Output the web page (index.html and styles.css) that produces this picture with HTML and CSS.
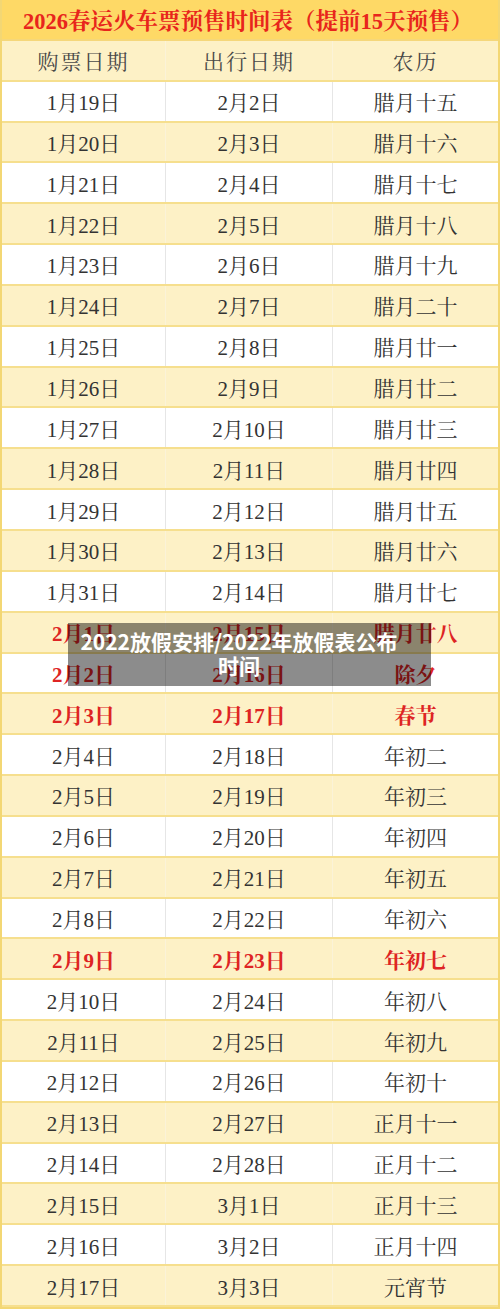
FILE: index.html
```html
<!DOCTYPE html>
<html lang="zh-CN">
<head>
<meta charset="utf-8">
<title>2026春运火车票预售时间表</title>
<link rel="stylesheet" href="styles.css">
</head>
<body>
<div class="page">
  <div class="table">
    <div class="title">2026春运火车票预售时间表（提前15天预售）</div>
    <div class="row head"><div class="cell">购票日期</div><div class="cell">出行日期</div><div class="cell">农历</div></div>
    <div class="row"><div class="cell">1月19日</div><div class="cell">2月2日</div><div class="cell">腊月十五</div></div>
    <div class="row alt"><div class="cell">1月20日</div><div class="cell">2月3日</div><div class="cell">腊月十六</div></div>
    <div class="row"><div class="cell">1月21日</div><div class="cell">2月4日</div><div class="cell">腊月十七</div></div>
    <div class="row alt"><div class="cell">1月22日</div><div class="cell">2月5日</div><div class="cell">腊月十八</div></div>
    <div class="row"><div class="cell">1月23日</div><div class="cell">2月6日</div><div class="cell">腊月十九</div></div>
    <div class="row alt"><div class="cell">1月24日</div><div class="cell">2月7日</div><div class="cell">腊月二十</div></div>
    <div class="row"><div class="cell">1月25日</div><div class="cell">2月8日</div><div class="cell">腊月廿一</div></div>
    <div class="row alt"><div class="cell">1月26日</div><div class="cell">2月9日</div><div class="cell">腊月廿二</div></div>
    <div class="row"><div class="cell">1月27日</div><div class="cell">2月10日</div><div class="cell">腊月廿三</div></div>
    <div class="row alt"><div class="cell">1月28日</div><div class="cell">2月11日</div><div class="cell">腊月廿四</div></div>
    <div class="row"><div class="cell">1月29日</div><div class="cell">2月12日</div><div class="cell">腊月廿五</div></div>
    <div class="row alt"><div class="cell">1月30日</div><div class="cell">2月13日</div><div class="cell">腊月廿六</div></div>
    <div class="row"><div class="cell">1月31日</div><div class="cell">2月14日</div><div class="cell">腊月廿七</div></div>
    <div class="row alt red"><div class="cell">2月1日</div><div class="cell">2月15日</div><div class="cell">腊月廿八</div></div>
    <div class="row red"><div class="cell">2月2日</div><div class="cell">2月16日</div><div class="cell">除夕</div></div>
    <div class="row alt red"><div class="cell">2月3日</div><div class="cell">2月17日</div><div class="cell">春节</div></div>
    <div class="row"><div class="cell">2月4日</div><div class="cell">2月18日</div><div class="cell">年初二</div></div>
    <div class="row alt"><div class="cell">2月5日</div><div class="cell">2月19日</div><div class="cell">年初三</div></div>
    <div class="row"><div class="cell">2月6日</div><div class="cell">2月20日</div><div class="cell">年初四</div></div>
    <div class="row alt"><div class="cell">2月7日</div><div class="cell">2月21日</div><div class="cell">年初五</div></div>
    <div class="row"><div class="cell">2月8日</div><div class="cell">2月22日</div><div class="cell">年初六</div></div>
    <div class="row alt red"><div class="cell">2月9日</div><div class="cell">2月23日</div><div class="cell">年初七</div></div>
    <div class="row"><div class="cell">2月10日</div><div class="cell">2月24日</div><div class="cell">年初八</div></div>
    <div class="row alt"><div class="cell">2月11日</div><div class="cell">2月25日</div><div class="cell">年初九</div></div>
    <div class="row"><div class="cell">2月12日</div><div class="cell">2月26日</div><div class="cell">年初十</div></div>
    <div class="row alt"><div class="cell">2月13日</div><div class="cell">2月27日</div><div class="cell">正月十一</div></div>
    <div class="row"><div class="cell">2月14日</div><div class="cell">2月28日</div><div class="cell">正月十二</div></div>
    <div class="row alt"><div class="cell">2月15日</div><div class="cell">3月1日</div><div class="cell">正月十三</div></div>
    <div class="row"><div class="cell">2月16日</div><div class="cell">3月2日</div><div class="cell">正月十四</div></div>
    <div class="row alt"><div class="cell">2月17日</div><div class="cell">3月3日</div><div class="cell">元宵节</div></div>
  </div>
  <div class="caption">2022放假安排/2022年放假表公布时间</div>
</div>
</body>
</html>
```

FILE: styles.css
```css
html, body {
  margin: 0;
  padding: 0;
  background: #ffffff;
}
.page {
  position: relative;
  width: 500px;
  height: 1309px;
  overflow: hidden;
}
.table {
  box-sizing: border-box;
  width: 500px;
  height: 1309px;
  display: grid;
  grid-template-rows: repeat(32, 1fr);
  border-left: 2px solid #f3d774;
  border-right: 2px solid #f3d774;
  border-bottom: 2px solid #f3d774;
  font-family: "Liberation Serif", "Noto Serif CJK SC", "Noto Sans CJK SC", serif;
  font-size: 21px;
  color: #333333;
}
.title {
  background: #fed966;
  color: #e8251c;
  font-weight: bold;
  font-size: 22.5px;
  display: flex;
  align-items: center;
  justify-content: center;
  border-bottom: 2px solid #f5d77a;
  padding-right: 4px;
}
.row {
  display: grid;
  grid-template-columns: 164px 167px 1fr;
  background: #ffffff;
  border-bottom: 2px solid #f6df8e;
}
.row.alt, .row.head {
  background: #fdf1c6;
}
.cell {
  display: flex;
  align-items: center;
  justify-content: center;
  border-right: 1px solid #e6e6e6;
}
.row.alt .cell, .row.head .cell {
  border-right-color: #fbf3d8;
}
.cell:last-child {
  border-right: none;
}
.row.head .cell {
  color: #484848;
  letter-spacing: 2px;
}
.row.red .cell {
  color: #de2424;
  font-weight: bold;
}
.caption {
  position: absolute;
  left: 68px;
  width: 363px;
  top: 623px;
  height: 63px;
  box-sizing: border-box;
  padding: 6px 31px 6px 10px;
  background: rgba(0, 0, 0, 0.45);
  color: #ffffff;
  font-family: "Noto Sans CJK SC", "Noto Sans", sans-serif;
  font-weight: bold;
  font-size: 21px;
  line-height: 24px;
  text-align: center;
}
```
